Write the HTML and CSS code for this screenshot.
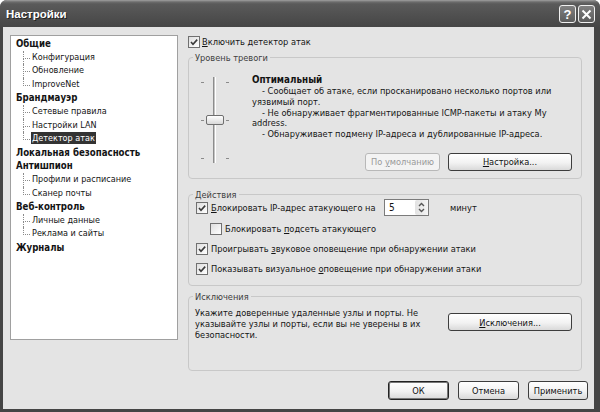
FILE: index.html
```html
<!DOCTYPE html>
<html lang="ru">
<head>
    <meta charset="UTF-8">
    <title>Настройки</title>
    <link rel="stylesheet" href="styles.css">
</head>
<body>
    <div class="window">
        <div class="titlebar">
            <span class="title">Настройки</span>
            <div class="caption">
                <span class="cap-btn">?</span>
                <span class="cap-btn">
                    <svg width="11" height="11" viewBox="0 0 11 11"><path d="M1.5 1.5l8 8M9.5 1.5l-8 8" stroke="#fff" stroke-width="2" fill="none"/></svg>
                </span>
            </div>
        </div>

        <div class="client">
            <div class="main">
                <!-- Section tree -->
                <ul class="tree">
                    <li><span class="node">Общие</span>
                        <ul class="sub">
                            <li>Конфигурация</li>
                            <li>Обновление</li>
                            <li>ImproveNet</li>
                        </ul>
                    </li>
                    <li><span class="node">Брандмауэр</span>
                        <ul class="sub">
                            <li>Сетевые правила</li>
                            <li>Настройки LAN</li>
                            <li><span class="sel">Детектор атак</span></li>
                        </ul>
                    </li>
                    <li><span class="node">Локальная безопасность</span></li>
                    <li><span class="node">Антишпион</span>
                        <ul class="sub">
                            <li>Профили и расписание</li>
                            <li>Сканер почты</li>
                        </ul>
                    </li>
                    <li><span class="node">Веб-контроль</span>
                        <ul class="sub">
                            <li>Личные данные</li>
                            <li>Реклама и сайты</li>
                        </ul>
                    </li>
                    <li><span class="node">Журналы</span></li>
                </ul>

                <div class="panel">
                    <label class="check enable">
                        <span class="box"><svg viewBox="0 0 10 10"><path d="M2 5l2 2.2L8.2 2.6" stroke="#3a3a3a" stroke-width="1.6" fill="none"/></svg></span>
                        <span><u>В</u>ключить детектор атак</span>
                    </label>

                    <!-- Alarm level -->
                    <div class="group level">
                        <div class="legend">Уровень тревоги</div>
                        <div class="level-body">
                            <div class="slider">
                                <div class="tick-row"><span class="tick"></span><span class="tick"></span></div>
                                <div class="tick-row"><span class="tick"></span><span class="thumb"></span><span class="tick"></span></div>
                                <div class="tick-row"><span class="tick"></span><span class="tick"></span></div>
                            </div>
                            <div class="level-text">
                                <div class="level-name">Оптимальный</div>
                                <div class="desc">
                                    <p>- Сообщает об атаке, если просканировано несколько портов или<br>уязвимый порт.</p>
                                    <p>- Не обнаруживает фрагментированные ICMP-пакеты и атаку My<br>address.</p>
                                    <p>- Обнаруживает подмену IP-адреса и дублированные IP-адреса.</p>
                                </div>
                                <div class="level-btns">
                                    <button class="btn disabled w-default">По <u>у</u>молчанию</button>
                                    <button class="btn w-wide"><u>Н</u>астройка...</button>
                                </div>
                            </div>
                        </div>
                    </div>

                    <!-- Actions -->
                    <div class="group actions">
                        <div class="legend">Действия</div>
                        <div class="actions-body">
                            <div class="row1">
                                <label class="check block-ip">
                                    <span class="box"><svg viewBox="0 0 10 10"><path d="M2 5l2 2.2L8.2 2.6" stroke="#3a3a3a" stroke-width="1.6" fill="none"/></svg></span>
                                    <span><u>Б</u>локировать IP-адрес атакующего на</span>
                                </label>
                                <div class="spin">
                                    <span>5</span>
                                    <span class="spin-btns">
                                        <svg viewBox="0 0 13 15" width="13" height="15"><path d="M4 6l2.5-2.5L9 6M4 9l2.5 2.5L9 9" stroke="#555" stroke-width="1.4" fill="none"/></svg>
                                    </span>
                                </div>
                                <span class="unit">минут</span>
                            </div>
                            <label class="check row sub-row">
                                <span class="box"></span>
                                <span>Блокировать <u>п</u>одсеть атакующего</span>
                            </label>
                            <label class="check row">
                                <span class="box"><svg viewBox="0 0 10 10"><path d="M2 5l2 2.2L8.2 2.6" stroke="#3a3a3a" stroke-width="1.6" fill="none"/></svg></span>
                                <span>Проигрывать <u>з</u>вуковое оповещение при обнаружении атаки</span>
                            </label>
                            <label class="check row">
                                <span class="box"><svg viewBox="0 0 10 10"><path d="M2 5l2 2.2L8.2 2.6" stroke="#3a3a3a" stroke-width="1.6" fill="none"/></svg></span>
                                <span>Показывать визуальное <u>о</u>повещение при обнаружении атаки</span>
                            </label>
                        </div>
                    </div>

                    <!-- Exceptions -->
                    <div class="group except">
                        <div class="legend">Исключения</div>
                        <div class="except-body">
                            <div class="except-text">Укажите доверенные удаленные узлы и порты. Не<br>указывайте узлы и порты, если вы не уверены в их<br>безопасности.</div>
                            <button class="btn w-wide except-btn"><u>И</u>сключения...</button>
                        </div>
                    </div>
                </div>
            </div>

            <div class="footer">
                <button class="btn default w-ok">ОК</button>
                <button class="btn w-ok">Отмена</button>
                <button class="btn w-apply">Применить</button>
            </div>
        </div>
    </div>
</body>
</html>
```

FILE: styles.css
```css
* {
    box-sizing: border-box;
}
body {
    margin: 0;
    width: 600px;
    height: 412px;
    overflow: hidden;
    background: #fff;
    font-family: "DejaVu Sans Condensed", "Liberation Sans", sans-serif;
    font-size: 9.2px;
    color: #141414;
}
u {
    text-decoration: underline;
    text-underline-offset: 1px;
}
.window {
    width: 600px;
    height: 412px;
    display: flex;
    flex-direction: column;
    background: #454545;
    border-radius: 7px 7px 0 0;
    overflow: hidden;
}
.titlebar {
    height: 27px;
    flex: none;
    display: flex;
    align-items: center;
    justify-content: space-between;
    padding: 0 5px 0 6px;
    background: linear-gradient(#a0a0a0 0, #6c6c6c 2px, #5a5a5a 4px, #4f4f4f 60%, #464646 100%);
}
.title {
    color: #fff;
    font-family: "Liberation Sans", sans-serif;
    font-weight: bold;
    font-size: 11.5px;
    text-shadow: 1px 1px 0 #222;
}
.caption {
    display: flex;
    gap: 2px;
    margin-top: 1px;
}
.cap-btn {
    width: 17px;
    height: 18px;
    border: 1px solid #f0f0f0;
    border-radius: 3px;
    background: linear-gradient(#808080, #5c5c5c);
    color: #fff;
    display: flex;
    align-items: center;
    justify-content: center;
    font: bold 13px "Liberation Sans", sans-serif;
}
.client {
    flex: 1;
    margin: 0 6px 3px 3px;
    background: #e4e4e4;
    display: flex;
    flex-direction: column;
}
.main {
    display: flex;
    gap: 10px;
    padding: 8px 12px 0 7px;
}

/* tree */
.tree {
    width: 168px;
    height: 305px;
    flex: none;
    margin: 0;
    padding: 1px 0 0 5px;
    list-style: none;
    background: #fff;
    border: 1px solid #a0a0a0;
    line-height: 13.6px;
    white-space: nowrap;
    font-size: 9px;
}
.tree ul {
    list-style: none;
    margin: 0;
    padding: 0;
}
.node {
    display: block;
    height: 13.6px;
    font-weight: bold;
    font-size: 9.6px;
}
.sub li {
    position: relative;
    height: 13.6px;
    margin-left: 7px;
    padding-left: 9px;
}
.sub li::before {
    content: "";
    position: absolute;
    left: 0;
    top: 0;
    width: 6px;
    height: 7px;
    border-left: 1px dotted #8a8a8a;
    border-bottom: 1px dotted #8a8a8a;
}
.sub li:not(:last-child)::after {
    content: "";
    position: absolute;
    left: 0;
    top: 7px;
    bottom: 0;
    border-left: 1px dotted #8a8a8a;
}
.sel {
    background: #333;
    color: #fff;
    margin-left: -1px;
    padding: 1px 1px;
}

/* right panel */
.panel {
    flex: 1;
    display: flex;
    flex-direction: column;
}
.check {
    display: flex;
    align-items: center;
    gap: 3px;
    white-space: nowrap;
}
.box {
    width: 12px;
    height: 12px;
    flex: none;
    border: 1px solid #707070;
    background: linear-gradient(135deg, #dedede, #fff);
    display: flex;
    align-items: center;
    justify-content: center;
}
.box svg {
    width: 10px;
    height: 10px;
}
.enable {
    height: 13px;
    gap: 2px;
}
.group {
    border: 1px solid #c8c8c8;
    border-radius: 4px;
}
.legend {
    width: fit-content;
    margin: -7px 0 0 4px;
    padding: 0 2px;
    line-height: 13px;
    background: #e4e4e4;
    color: #404040;
}

.level {
    margin-top: 9px;
    height: 122px;
}
.level-body {
    display: flex;
    padding: 0 9px 0 12px;
}
.slider {
    width: 28px;
    height: 86px;
    margin-top: 13px;
    display: flex;
    flex-direction: column;
    justify-content: space-between;
    background: linear-gradient(90deg, transparent 12px, #8c8c8c 12px, #8c8c8c 13px, #c4c4c4 13px, #c4c4c4 14px, #fff 14px, #fff 15px, transparent 15px);
}
.tick-row {
    height: 10px;
    display: flex;
    align-items: center;
    justify-content: space-between;
}
.tick {
    width: 3px;
    height: 1px;
    background: #8a8a8a;
}
.thumb {
    width: 18px;
    height: 10px;
    border: 1px solid #6f6f6f;
    border-radius: 2px;
    background: linear-gradient(#fff, #d8d8d8);
}
.level-text {
    flex: 1;
    margin: 10px 0 0 23px;
}
.level-name {
    font-weight: bold;
    font-size: 9.8px;
    line-height: 11px;
    margin-bottom: 1px;
}
.desc p {
    margin: 0;
    text-indent: 10px;
    line-height: 10.75px;
    white-space: nowrap;
}
.level-btns {
    display: flex;
    justify-content: flex-end;
    gap: 8px;
    margin-top: 13px;
}

.btn {
    display: block;
    height: 18px;
    padding: 0;
    border: 1px solid #3d3d3d;
    border-radius: 3px;
    background: linear-gradient(#fff, #f2f2f2 55%, #d9d9d9);
    font: inherit;
    line-height: 15px;
    text-align: center;
    white-space: nowrap;
    color: #111;
}
.btn.disabled {
    border-color: #b8b8b8;
    background: #f3f3f3;
    color: #999;
}
.btn.default {
    border-color: #222;
    box-shadow: inset 0 0 0 1px #777;
}
.w-default { width: 75px; }
.w-wide { width: 124px; }
.w-ok { width: 61px; height: 19px; }
.w-apply { width: 60px; height: 19px; }

.actions {
    margin-top: 15px;
    height: 92px;
}
.actions-body {
    display: flex;
    flex-direction: column;
    padding-left: 7px;
}
.row1 {
    display: flex;
    align-items: center;
    height: 17px;
    margin-top: -2px;
}
.block-ip {
    width: 188px;
}
.spin {
    width: 45px;
    height: 17px;
    border: 1px solid #7b7b7b;
    background: #fff;
    display: flex;
    align-items: center;
    justify-content: space-between;
    padding-left: 4px;
    font-size: 10px;
}
.spin-btns {
    width: 13px;
    height: 15px;
    display: flex;
    background: linear-gradient(90deg, #e2e2e2, #f4f4f4);
    border-radius: 2px;
}
.unit {
    margin-left: 21px;
}
.row {
    height: 13px;
    margin-top: 7px;
}
.sub-row {
    margin-top: 6px;
    padding-left: 14px;
}

.except {
    margin-top: 10px;
    height: 75px;
}
.except-body {
    display: flex;
    justify-content: space-between;
    align-items: flex-start;
    padding: 4px 9px 0 6px;
}
.except-text {
    line-height: 11px;
    white-space: nowrap;
}
.except-btn {
    margin-top: 6px;
}

.footer {
    margin-top: auto;
    display: flex;
    justify-content: flex-end;
    gap: 9px;
    padding: 0 6px 9px 0;
}
```
